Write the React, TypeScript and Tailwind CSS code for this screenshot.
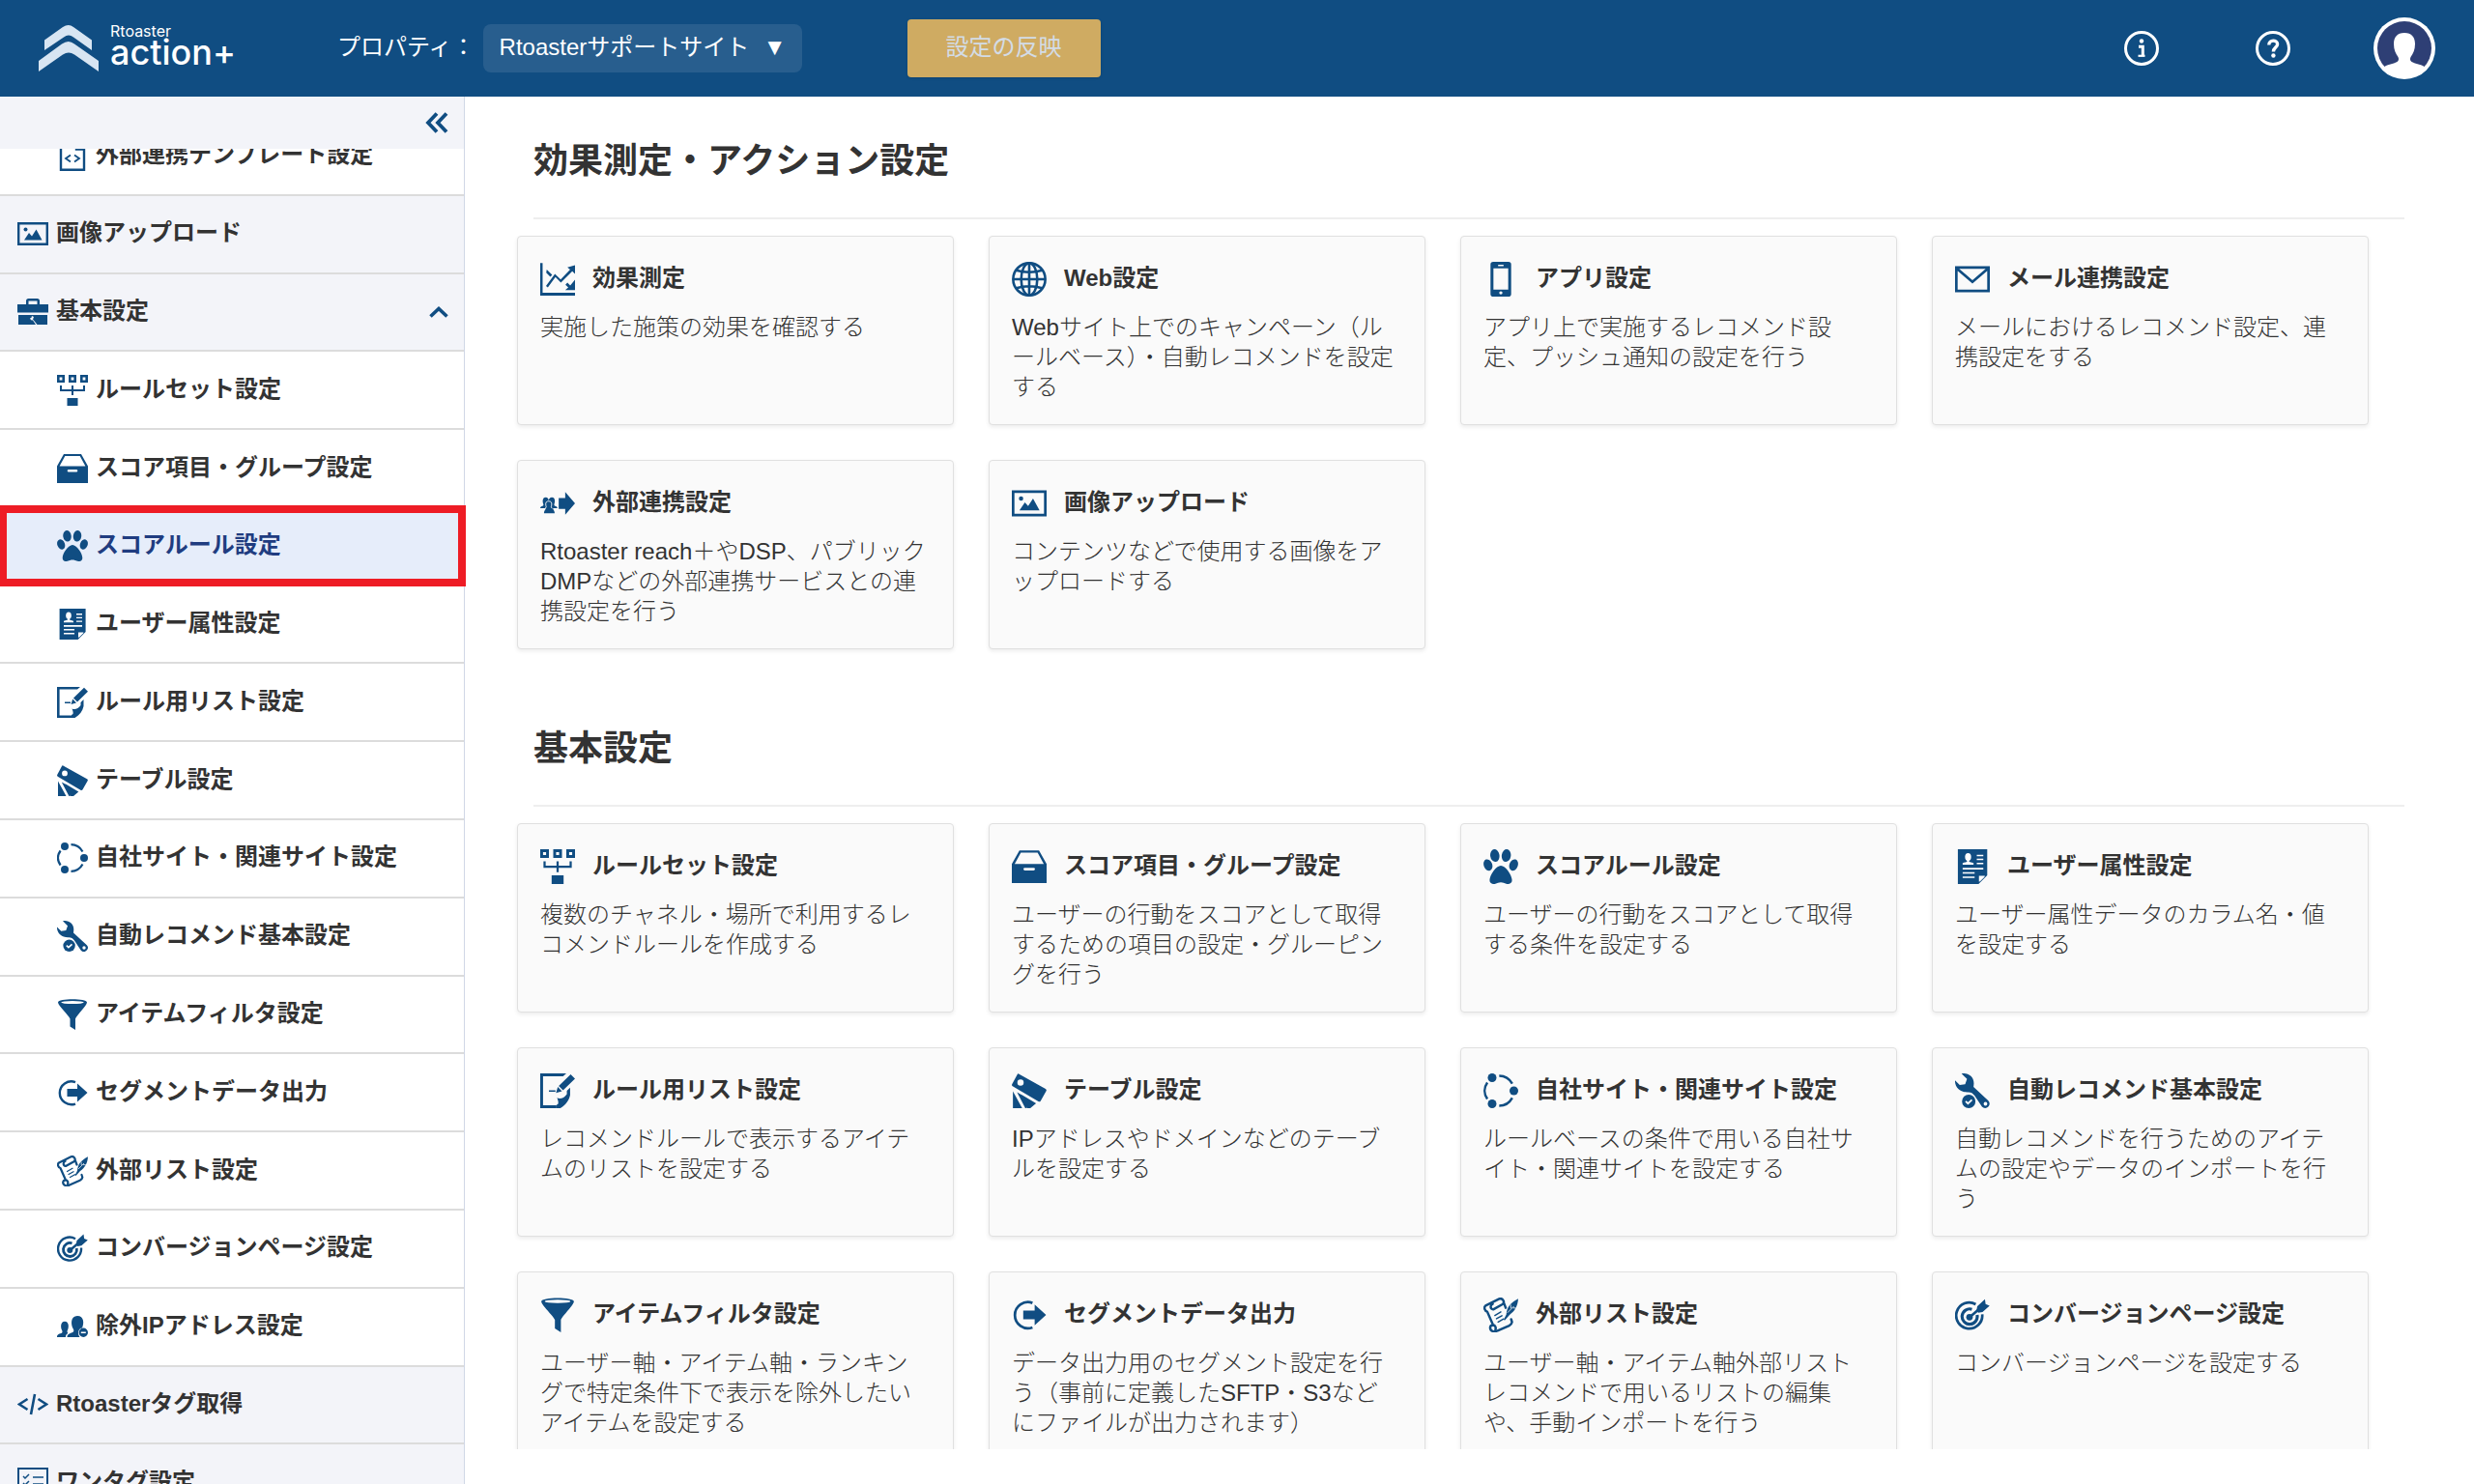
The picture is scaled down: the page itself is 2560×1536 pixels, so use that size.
import React from 'react';

type IconProps = { className?: string };
type IconType = React.FC<IconProps>;

const Svg: React.FC<IconProps & { children: React.ReactNode }> = ({ className, children }) => (
  <svg viewBox="0 0 32 32" fill="currentColor" aria-hidden="true" className={className}>
    {children}
  </svg>
);

const RuleSetIcon: IconType = (p) => (
  <Svg {...p}>
    <path fillRule="evenodd" d="M0 0h8v8H0zM2.6 2.6v2.8h2.8V2.6zM12 0h8v8h-8zM14.6 2.6v2.8h2.8V2.6zM24 0h8v8h-8zM26.6 2.6v2.8h2.8V2.6z" />
    <path d="M3 11h2v4h10v-4h2v4h10v-4h2v6H17v4h-2v-4H3zM10.5 24h11v8h-11z" />
  </Svg>
);

const DrawerIcon: IconType = (p) => (
  <Svg {...p}>
    <path fillRule="evenodd" d="M7 1h18l7 12.500V31H0V13.500zM8.300 3 2.600 13.500h26.800L23.700 3zM12 17a1.200 1.200 0 0 0 0 2.600h8a1.200 1.200 0 0 0 0-2.600z" />
  </Svg>
);

const PawIcon: IconType = (p) => (
  <Svg {...p}>
    <ellipse cx="10.500" cy="5.800" rx="4.200" ry="5.800" transform="rotate(-8 10.500 5.800)" />
    <ellipse cx="21" cy="5.800" rx="4.200" ry="5.800" transform="rotate(8 21 5.800)" />
    <ellipse cx="4.200" cy="14.500" rx="3.900" ry="5.400" transform="rotate(-20 4.200 14.500)" />
    <ellipse cx="27.800" cy="14.500" rx="3.900" ry="5.400" transform="rotate(20 27.800 14.500)" />
    <path d="M16 15c4.200 0 10.300 8.500 10.300 13.500 0 3.200-3 4-5.300 3.300-1.800-.6-3-1.300-5-1.300s-3.200.7-5 1.300c-2.300.7-5.300-.1-5.300-3.300C5.700 23.500 11.800 15 16 15z" />
  </Svg>
);

const ProfileDocIcon: IconType = (p) => (
  <Svg {...p}>
    <path fillRule="evenodd" d="M2.600 0h27v24l-8 8h-19zM22.500 25v5l5-5z" />
    <g fill="#fff">
      <ellipse cx="12" cy="7.200" rx="2.800" ry="3.600" />
      <path d="M11 9h2v2.500l4 1.200v1.500H7v-1.500l4-1.200z" />
      <path d="M20 5h6v1.400h-6zM20 8.700h6v1.400h-6zM20 12.400h6v1.400h-6zM7 17h19v1.700H7zM7 21h11v1.500H7zM7 25h11v1.500H7z" />
      <path d="M22 24.500h5.600l-5.600 5.500z" />
    </g>
  </Svg>
);

const EditDocIcon: IconType = (p) => (
  <Svg {...p}>
    <path d="M0 0h24l-3 2.600H2.600v26.800H15V32H0z" />
    <path d="M15 32v-3l1.500-1c.5-2-.5-4-1-5.500 3 1.500 6.500 0 9-3.500V16l3-3v7c-1 5-4 9-9 12z" />
    <path d="m28 .8 4 4-11 10.800-4-4zM16.200 12.500l3.800 4-5.500 1.600zM8 15.500h6v1.400H8z" />
  </Svg>
);

const SwatchIcon: IconType = (p) => (
  <Svg {...p}>
    <path fillRule="evenodd" d="M6.300.4 31 14.200q1.300.8.600 2.100l-5.100 9q-.8 1.200-2.100.5L.7 11.700q-1.100-.7-.4-2L5 1q.4-.9 1.300-.6zM8 5.500a2.900 2.900 0 1 0 0 5.800 2.900 2.900 0 0 0 0-5.800z" />
    <path d="M1 16.500 9.500 32H1zM4.800 17.400l7.200 4.100 1.600 10.500h-1.200zM8.500 19.300 22.300 27.500 17 32h-3z" />
  </Svg>
);

const NetworkIcon: IconType = (p) => (
  <Svg {...p}>
    <circle cx="8" cy="4" r="4" />
    <circle cx="28" cy="16" r="4" />
    <circle cx="8" cy="28" r="4" />
    <path fill="none" stroke="currentColor" strokeWidth="2.200" d="M3.600 8.500c-3.300 4.600-3.300 10.400 0 15M14.500 2.200c5 0 9.500 2.800 12 7.300M14.500 29.800c5 0 9.500-2.800 12-7.300" />
  </Svg>
);

const WrenchIcon: IconType = (p) => (
  <Svg {...p}>
    <path fillRule="evenodd" d="M6 .3C12-.9 17.300 3.200 17.300 9c0 1.200-.2 2.300-.3 3.500L30.600 25a4 4 0 1 1-5.800 5.700L18 20.500c-1.800-2.400-3.500-3.300-6-3.200C5 17.600-.4 13 0 6.500l4.300 4.200 5-.8 1.700-4.700zM28 26.300a1.700 1.700 0 1 0 0 3.400 1.700 1.700 0 0 0 0-3.400z" />
    <circle cx="12.600" cy="25.800" r="6.200" />
    <path fill="none" stroke="#fff" strokeWidth="1.600" d="m9.800 25.700 2.100 2 3.600-3.400" />
  </Svg>
);

const FunnelIcon: IconType = (p) => (
  <Svg {...p}>
    <path d="M1 3.500C1-.7 31-.7 31 3.500 31 7 20.500 16.500 19 20.500V32l-5.500-3.500v-8C12 16.500 1 7 1 3.500z" />
    <ellipse cx="16" cy="3.600" rx="11.800" ry="1.500" fill="#fff" />
  </Svg>
);

const ExportIcon: IconType = (p) => (
  <Svg {...p}>
    <path fill="none" stroke="currentColor" strokeWidth="2.400" d="M19 5A12 12 0 1 0 19 27.500" />
    <path d="M10.500 12H21V6.500L31.500 16 21 25.500V20H10.500z" />
  </Svg>
);

const ScrollIcon: IconType = (p) => (
  <Svg {...p}>
    <g fill="none" stroke="currentColor" strokeWidth="2.200" strokeLinecap="round" strokeLinejoin="round">
      <path d="M2 7.500 14.500 1.200c3.500-1 5.500 3.300 3 5L9 11c-3-.5-3-4-.5-5.200M2 7.500C0 9 1.200 12.500 3.500 13L9 25.500M19 5.500l1.500 4M25.500 20l.8 2.500c-.3 2-1 2.500-2.600 3.300L13 30.500c-3 1.800-7 .5-6.800-3 .3-2.600 3.800-3 4.800-.7.700 1.700 0 2.500 0 2.500" />
      <path strokeWidth="1.300" d="m10.500 16.500 5.500-3.200M12 19.500l5-2.800M13.500 22.500l5-2.800" />
    </g>
    <path d="M32 1.200C31.500 8 29 12.500 24 16l-4.500 5-.8-.8 2.300-4.500C21.500 8.500 25.500 4.500 32 1.200z" />
    <path stroke="#fff" strokeWidth=".7" d="m22 14 6-6M27 9.500l3 .3M25 6.500l.3 3.500" />
  </Svg>
);

const TargetIcon: IconType = (p) => (
  <Svg {...p}>
    <g fill="none" stroke="currentColor" strokeWidth="2.400">
      <path d="M19 6.200A12 12 0 1 0 25 15.500" />
      <path d="M15.500 10.800A7 7 0 1 0 20.300 16" strokeWidth="2.800" />
      <path d="m13.500 18 10-8.500" />
    </g>
    <circle cx="13.300" cy="18" r="3" />
    <path d="M19.800 11.500 20.500 8l7-6.500.6 4.500 3.700 1.500-6.500 5.800-4 .6z" />
  </Svg>
);

const UsersMinusIcon: IconType = (p) => (
  <Svg {...p}>
    <path d="M0 27c0-2.500 1-3 4.800-4.300.9-.3.900-1.900.3-3-1.500-2.500-1.700-9 2.900-9s4.400 6.500 2.900 9c-.6 1-.4 2.500.5 3-1.500 1.300-2.500 2-2.500 4.300z" />
    <path d="M10.500 27c0-3 2-3.600 5.700-5 1.500-.6 1.300-2.500.6-3.500C14 14 14 5 21 5s7.200 7.500 5 12.500c-3.500.3-5.500 5-2.500 9.500z" />
    <path fillRule="evenodd" d="M27.300 17.600a4.700 4.700 0 1 0 0 9.400 4.700 4.700 0 0 0 0-9.400zm-2.500 4h5V23h-5z" />
  </Svg>
);

const CodeIcon: IconType = (p) => (
  <Svg {...p}>
    <path fill="none" stroke="currentColor" strokeWidth="2.600" d="M10.500 10 2 15.500l8.500 5.500M21.500 10l8.500 5.500-8.500 5.500M18 5l-4 21" />
  </Svg>
);

const ChecklistIcon: IconType = (p) => (
  <Svg {...p}>
    <path fill="none" stroke="currentColor" strokeWidth="2" d="M1 1h30v30H1z" />
    <path fill="none" stroke="currentColor" strokeWidth="1.500" d="m6 9 2 2 4-4M16 10h11M6 16l2 2 4-4M16 17h11M6 23l2 2 4-4M16 24h11" />
  </Svg>
);

const ImageIcon: IconType = (p) => (
  <Svg {...p}>
    <path fillRule="evenodd" d="M0 4h32v24H0zM2.400 6.400v19.200h27.200V6.400z" />
    <circle cx="8.500" cy="11.500" r="2" />
    <path d="M7 22.500 12 15l3 3.500 4.500-7 6 11z" />
  </Svg>
);

const ToolboxIcon: IconType = (p) => (
  <Svg {...p}>
    <path d="M9 8V4.500Q9 2 11.500 2h9Q23 2 23 4.500V8h-2.500V4.500h-9V8zM0 8h32v8.500H0z" />
    <path fillRule="evenodd" d="M1 19h30v10H20.500L16 23.500l1-2.500-2-1-.6 2-1.400.2 1 2 2 .3L19 29H1z" />
  </Svg>
);

const CodeFileIcon: IconType = (p) => (
  <Svg {...p}>
    <path fill="none" stroke="currentColor" strokeWidth="2.400" d="M4 1.200h17l7 7v22.600H4zM20 1v8.500h8" />
    <path fill="none" stroke="currentColor" strokeWidth="1.800" d="m14 15.500-5 3.500 5 3.500M18 15.500l5 3.500-5 3.500" />
  </Svg>
);

const ChartIcon: IconType = (p) => (
  <Svg {...p}>
    <path d="M0 1h2.200v27.500H32V31H0zM32 3v8l-2.500-2.300L19 19l-5-5-7 9.500-1.700-1.300L13.500 11l5.300 5.200 8.700-9L25 5zM32 16.500V26h-9l2.800-2.500-2.600-2.500 1.800-1.800 2.600 2.600zM6 7l5 5-1.700 1.700L5.500 10z" />
  </Svg>
);

const GlobeIcon: IconType = (p) => (
  <Svg {...p}>
    <g fill="none" stroke="currentColor" strokeWidth="2.300">
      <circle cx="16" cy="16" r="14.800" />
      <ellipse cx="16" cy="16" rx="7.400" ry="14.800" />
      <path d="M16 1v30M1 16h30M4 7.800q12 3.600 24 0M4 24.200q12-3.600 24 0" />
    </g>
  </Svg>
);

const PhoneIcon: IconType = (p) => (
  <Svg {...p}>
    <path fillRule="evenodd" d="M9 0h14q2.500 0 2.500 2.500v27Q25.500 32 23 32H9q-2.500 0-2.500-2.500v-27Q6.500 0 9 0zm.2 6v19.500h13.600V6zM13.500 2.600V4h5V2.600zM16 27a1.500 1.500 0 1 0 0 3 1.500 1.500 0 0 0 0-3z" />
  </Svg>
);

const MailIcon: IconType = (p) => (
  <Svg {...p}>
    <path fill="none" stroke="currentColor" strokeWidth="2.400" d="M1.200 5.200h29.600v21.600H1.200zM1.500 6 16 18.500 30.500 6" />
  </Svg>
);

const ExternalIcon: IconType = (p) => (
  <Svg {...p}>
    <path d="M17 11h6V5.500L32 16l-9 10.500V21h-6z" />
    <path d="M0 20.500c0-2.500 3-1.500 3-3.500-1-2-1.200-6.500 2-6.500 2 0 2.800 1.500 2.800 3.500 0-2 1-3.500 3-3.500 3.200 0 3 4.500 2 6.500 0 2 3 1 3 3.500h-4c0 2 1.500 2 1.500 4.500H3.500c0-2.500 1.500-2.500 1.500-4.500z" />
    <path stroke="#fafafa" strokeWidth=".8" fill="none" d="M4.500 20.500c1.500-.5 1-1.500.7-2.500-.7-3 .8-4 2.600-4s3.300 1 2.600 4c-.3 1-.8 2 .7 2.500" />
  </Svg>
);

const Logo = () => (
  <a href="#" aria-label="Rtoaster action+" className="flex items-center gap-3 text-white">
    <svg viewBox="0 0 62 48" className="h-12 w-[62px]" fill="#d8e5f2" aria-hidden="true">
      <path d="M6 15.500 25 2Q31-2 36 2L55 15.500V26L36 12.500q-5-4-10 0L6 26z" />
      <path d="M0 37 24 19.500q7-5 13 0L62 37v11L37 30.500q-6-4-12 0L0 48z" />
    </svg>
    <span className="flex flex-col pb-1 font-['Inter','Liberation_Sans',sans-serif]">
      <span className="text-base leading-3">Rtoaster</span>
      <span className="text-4xl font-medium leading-8">action+</span>
    </span>
  </a>
);

interface MenuEntry {
  label: string;
  icon: IconType;
  group?: boolean;
  open?: boolean;
  active?: boolean;
}

const menu: MenuEntry[] = [
  { label: '外部連携テンプレート設定', icon: CodeFileIcon },
  { label: '画像アップロード', icon: ImageIcon, group: true },
  { label: '基本設定', icon: ToolboxIcon, group: true, open: true },
  { label: 'ルールセット設定', icon: RuleSetIcon },
  { label: 'スコア項目・グループ設定', icon: DrawerIcon },
  { label: 'スコアルール設定', icon: PawIcon, active: true },
  { label: 'ユーザー属性設定', icon: ProfileDocIcon },
  { label: 'ルール用リスト設定', icon: EditDocIcon },
  { label: 'テーブル設定', icon: SwatchIcon },
  { label: '自社サイト・関連サイト設定', icon: NetworkIcon },
  { label: '自動レコメンド基本設定', icon: WrenchIcon },
  { label: 'アイテムフィルタ設定', icon: FunnelIcon },
  { label: 'セグメントデータ出力', icon: ExportIcon },
  { label: '外部リスト設定', icon: ScrollIcon },
  { label: 'コンバージョンページ設定', icon: TargetIcon },
  { label: '除外IPアドレス設定', icon: UsersMinusIcon },
  { label: 'Rtoasterタグ取得', icon: CodeIcon, group: true },
  { label: 'ワンタグ設定', icon: ChecklistIcon, group: true },
];

interface CardData {
  title: string;
  text: string;
  icon: IconType;
}

const sections: { title: string; cards: CardData[] }[] = [
  {
    title: '効果測定・アクション設定',
    cards: [
      { title: '効果測定', icon: ChartIcon, text: '実施した施策の効果を確認する' },
      { title: 'Web設定', icon: GlobeIcon, text: 'Webサイト上でのキャンペーン（ル\nールベース）・自動レコメンドを設定\nする' },
      { title: 'アプリ設定', icon: PhoneIcon, text: 'アプリ上で実施するレコメンド設\n定、プッシュ通知の設定を行う' },
      { title: 'メール連携設定', icon: MailIcon, text: 'メールにおけるレコメンド設定、連\n携設定をする' },
      { title: '外部連携設定', icon: ExternalIcon, text: 'Rtoaster reach＋やDSP、パブリック\nDMPなどの外部連携サービスとの連\n携設定を行う' },
      { title: '画像アップロード', icon: ImageIcon, text: 'コンテンツなどで使用する画像をア\nップロードする' },
    ],
  },
  {
    title: '基本設定',
    cards: [
      { title: 'ルールセット設定', icon: RuleSetIcon, text: '複数のチャネル・場所で利用するレ\nコメンドルールを作成する' },
      { title: 'スコア項目・グループ設定', icon: DrawerIcon, text: 'ユーザーの行動をスコアとして取得\nするための項目の設定・グルーピン\nグを行う' },
      { title: 'スコアルール設定', icon: PawIcon, text: 'ユーザーの行動をスコアとして取得\nする条件を設定する' },
      { title: 'ユーザー属性設定', icon: ProfileDocIcon, text: 'ユーザー属性データのカラム名・値\nを設定する' },
      { title: 'ルール用リスト設定', icon: EditDocIcon, text: 'レコメンドルールで表示するアイテ\nムのリストを設定する' },
      { title: 'テーブル設定', icon: SwatchIcon, text: 'IPアドレスやドメインなどのテーブ\nルを設定する' },
      { title: '自社サイト・関連サイト設定', icon: NetworkIcon, text: 'ルールベースの条件で用いる自社サ\nイト・関連サイトを設定する' },
      { title: '自動レコメンド基本設定', icon: WrenchIcon, text: '自動レコメンドを行うためのアイテ\nムの設定やデータのインポートを行\nう' },
      { title: 'アイテムフィルタ設定', icon: FunnelIcon, text: 'ユーザー軸・アイテム軸・ランキン\nグで特定条件下で表示を除外したい\nアイテムを設定する' },
      { title: 'セグメントデータ出力', icon: ExportIcon, text: 'データ出力用のセグメント設定を行\nう（事前に定義したSFTP・S3など\nにファイルが出力されます）' },
      { title: '外部リスト設定', icon: ScrollIcon, text: 'ユーザー軸・アイテム軸外部リスト\nレコメンドで用いるリストの編集\nや、手動インポートを行う' },
      { title: 'コンバージョンページ設定', icon: TargetIcon, text: 'コンバージョンページを設定する' },
    ],
  },
];

const MenuRow: React.FC<{ entry: MenuEntry }> = ({ entry }) => {
  const Icon = entry.icon;
  const tone = entry.group ? 'bg-[#f3f4f9] pl-[18px]' : entry.active ? 'bg-[#e6edfa] pl-[59px]' : 'bg-white pl-[59px]';
  return (
    <li className={`relative flex min-h-12 flex-1 border-b-2 border-[#dcdcdc] ${tone}`}>
      <a
        href="#"
        aria-current={entry.active ? 'page' : undefined}
        className={`flex flex-1 items-center gap-2 pr-4 text-2xl font-bold leading-8 ${entry.active ? 'text-[#203c80]' : 'text-[#333]'}`}
      >
        <Icon className="size-8 shrink-0 text-[#104d82]" />
        <span className="flex-1 whitespace-nowrap pb-[2px]">{entry.label}</span>
        {entry.open && (
          <svg viewBox="0 0 20 12" className="h-3 w-5 text-[#104d82]" fill="none" stroke="currentColor" strokeWidth="3.600" aria-hidden="true">
            <path d="m1.500 10.500 8.500-8 8.500 8" />
          </svg>
        )}
      </a>
      {entry.active && <span className="pointer-events-none absolute -left-px -right-[2px] -top-[3px] bottom-[-2px] z-10 border-8 border-[#ee1c25]" />}
    </li>
  );
};

const Card: React.FC<{ card: CardData }> = ({ card }) => {
  const Icon = card.icon;
  return (
    <a href="#" className="block min-h-[196px] rounded border border-[#e0e0e0] bg-[#fafafa] pb-4 pl-[23px] pr-3 pt-[26px] text-[#333] shadow-[0_2px_4px_rgba(0,0,0,0.08)]">
      <h3 className="flex items-center gap-[18px] text-2xl font-bold leading-9">
        <Icon className="size-9 shrink-0 text-[#104d82]" />
        <span className="pb-[2px] leading-8">{card.title}</span>
      </h3>
      <p className="mt-4 whitespace-pre-line text-2xl font-light leading-[31px]">{card.text}</p>
    </a>
  );
};

export default function App() {
  return (
    <div className="flex h-screen flex-col overflow-hidden bg-white font-['Liberation_Sans','Noto_Sans_CJK_JP',sans-serif] text-[#333]" lang="ja">
      <header className="flex h-[100px] shrink-0 items-center bg-[#104d82] px-10 text-2xl text-white">
        <Logo />
        <div className="ml-[105px] flex items-center">
          <label htmlFor="property" className="pb-[2px] pr-2">プロパティ：</label>
          <div className="relative">
            <select id="property" className="h-[50px] appearance-none rounded-lg bg-[#285e8e] pb-[2px] pl-[17px] pr-[54px] text-white">
              <option>Rtoasterサポートサイト</option>
            </select>
            <span className="pointer-events-none absolute right-4 top-4 text-2xl leading-4">▼</span>
          </div>
          <button type="button" className="ml-[109px] h-[60px] w-[200px] rounded bg-[#cfab62] pb-[2px] text-[#d3dce6] shadow">
            設定の反映
          </button>
        </div>
        <div className="ml-auto flex items-center">
          <button type="button" aria-label="お知らせ" className="mr-[100px]">
            <svg viewBox="0 0 36 36" className="size-9" fill="none" stroke="#fff" aria-hidden="true">
              <circle cx="18" cy="18" r="16.500" strokeWidth="3" />
              <circle cx="18" cy="10.500" r="2.200" fill="#fff" stroke="none" />
              <path strokeWidth="3" d="M15 16.200h4.300V25" />
              <path strokeWidth="2.200" d="M14.500 25.800h7" />
            </svg>
          </button>
          <button type="button" aria-label="ヘルプ" className="mr-[86px]">
            <svg viewBox="0 0 36 36" className="size-9" fill="none" stroke="#fff" aria-hidden="true">
              <circle cx="18" cy="18" r="16.500" strokeWidth="3" />
              <path strokeWidth="3.400" d="M13.800 14.500c0-6 8.800-5.500 8.800-.8 0 3.300-4.200 3.500-4.200 7.800" />
              <circle cx="18.400" cy="25.500" r="2.200" fill="#fff" stroke="none" />
            </svg>
          </button>
          <button type="button" aria-label="アカウント">
            <svg viewBox="0 0 64 64" className="size-16" aria-hidden="true">
              <circle cx="32" cy="32" r="32" fill="#fff" />
              <circle cx="32" cy="32" r="28" fill="#2e3f75" />
              <path fill="#fff" d="M32 16c7.500 0 11 4.500 11 11.500 0 6-2 10-4.500 13.500-1 2-.5 4 1 5 4.500 2.500 9.500 2 13.500 5.500-5 6.500-13 9.500-21 9.500s-16-3-21-9.500c4-3.500 9-3 13.500-5.500 1.500-1 2-3 1-5C23 37.500 21 33.500 21 27.500 21 20.500 24.500 16 32 16z" />
            </svg>
          </button>
        </div>
      </header>

      <div className="flex min-h-0 flex-1">
        <aside className="flex w-[482px] shrink-0 flex-col overflow-hidden pr-px">
          <div className="z-20 flex h-[54px] shrink-0 items-center justify-end border-r border-[#d0d7e6] bg-[#f3f4f9] pr-4">
            <button type="button" aria-label="メニューを閉じる" className="text-[#104d82]">
              <svg viewBox="0 0 24 22" className="h-[22px] w-6" fill="none" stroke="currentColor" strokeWidth="3.800" aria-hidden="true">
                <path d="m12 1.500-9 9.500 9 9.500M22 1.500 13 11l9 9.500" />
              </svg>
            </button>
          </div>
          <nav className="flex min-h-0 flex-1 flex-col">
            {/* list is scrolled so the first and last rows are cut */}
            <ul className="-mb-10 -mt-8 flex flex-1 flex-col border-r border-[#d0d7e6]">
              {menu.map((entry) => (
                <MenuRow key={entry.label} entry={entry} />
              ))}
            </ul>
          </nav>
        </aside>

        <main className="mb-9 min-w-0 flex-1 overflow-hidden">
          {sections.map((section) => (
            <section key={section.title} className="pb-9">
              <h2 className="ml-[70px] mr-[72px] border-b-2 border-[#eee] pb-[34px] pt-[42px] text-4xl font-bold leading-[49px]">{section.title}</h2>
              <div className="ml-[53px] mr-[109px] mt-[17px] grid grid-cols-4 gap-9">
                {section.cards.map((card) => (
                  <Card key={card.title} card={card} />
                ))}
              </div>
            </section>
          ))}
        </main>
      </div>
    </div>
  );
}
